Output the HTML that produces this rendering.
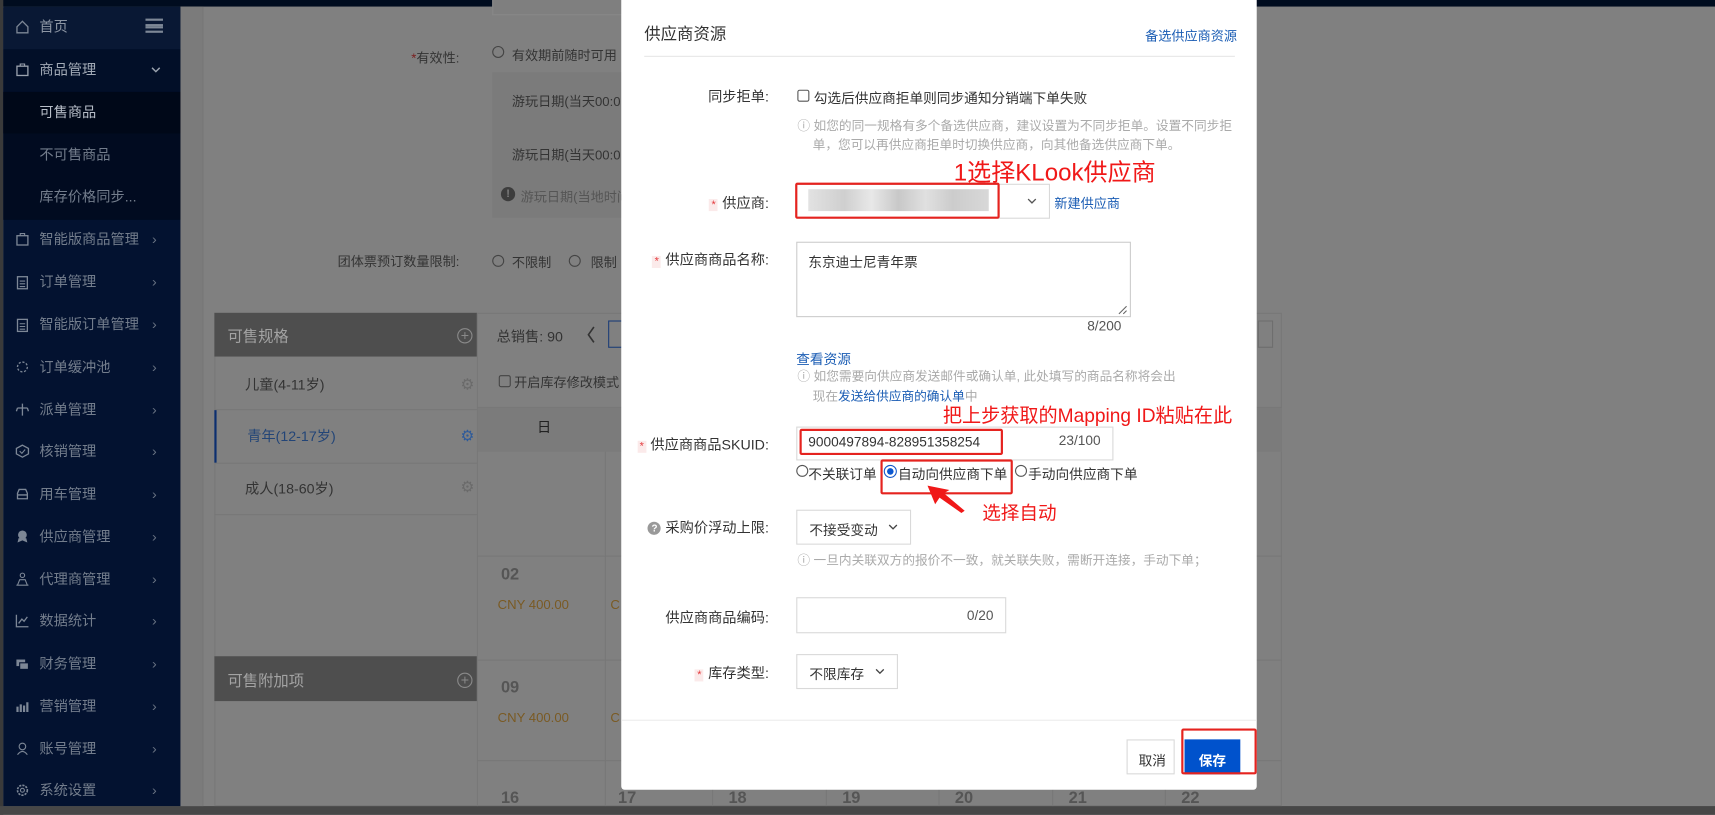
<!DOCTYPE html>
<html><head><meta charset="utf-8"><style>
*{margin:0;padding:0;box-sizing:border-box}
html,body{width:1715px;height:815px;overflow:hidden;background:#808080}
#w{position:absolute;left:0;top:0;width:1568px;height:745px;transform:scale(1.09375);transform-origin:0 0;font-family:"Liberation Sans","Noto Sans CJK SC",sans-serif;background:#808080;overflow:hidden}
.a{position:absolute;white-space:nowrap}
.sb{position:absolute;left:3px;top:7px;width:162px;height:730px;background:#031230}
.mi{position:absolute;left:3px;width:162px;height:39px;font-size:13px;color:#737d8c;line-height:39px}
.mi .t{position:absolute;left:33px}
.mi .ar{position:absolute;left:136px;font-size:13px;color:#687282}
.mi svg{position:absolute;left:11px;top:13px}
.lbl{position:absolute;font-size:13px;color:#333;text-align:right;width:180px;white-space:nowrap}
.req{color:#e4393c;font-size:10px;margin-right:4px;background:#fbeaea;padding:0 2px}
.hint{position:absolute;font-size:11.6px;color:#aaa;white-space:nowrap}
.inp{position:absolute;border:1px solid #d9d9d9;background:#fff}
.red{position:absolute;border:2px solid #e5231f;border-radius:2px}
.lk{color:#1b5db4}
.chev{position:absolute}
</style></head><body><div id="w">
<div class="a" style="left:0;top:0;width:1568px;height:6px;background:#000c1f"></div>
<div class="a" style="left:0;top:0;width:3px;height:745px;background:#3a3a3a"></div>
<div class="a" style="left:0;top:737px;width:1568px;height:8px;background:#474747"></div>
<div class="sb"></div>
<div class="a" style="left:3px;top:6px;width:162px;height:39px;background:#091834"></div>
<div class="a" style="left:3px;top:45px;width:162px;height:39px;background:#020f28"></div>
<div class="a" style="left:3px;top:84px;width:162px;height:117px;background:#010b20"></div>
<div class="a" style="left:3px;top:84px;width:162px;height:38px;background:#000818"></div>
<div class="mi" style="top:5px"><svg width="13" height="13" viewBox="0 0 13 13"><path d="M1.5 6.5L6.5 1.5L11.5 6.5V12H1.5Z" fill="none" stroke="#7d8796" stroke-width="1.2"/></svg><span class="t" style="color:#8d96a4">首页</span><span class="a" style="left:130px;top:12px;width:16px;height:13px;border-top:2px solid #7d8796;border-bottom:2px solid #7d8796"><span class="a" style="left:0;top:2.5px;width:16px;height:4px;border-top:2px solid #7d8796;border-bottom:2px solid #7d8796"></span></span></div>
<div class="mi" style="top:44px"><svg width="13" height="13"><rect x="1.5" y="3.5" width="10" height="8.5" fill="none" stroke="#9aa2ae" stroke-width="1.2"/><path d="M4.5 3.5V1.5H8.5V3.5" fill="none" stroke="#9aa2ae"/></svg><span class="t" style="color:#a2aab6">商品管理</span><svg style="left:135px;top:17px" width="9" height="6"><path d="M1 1L4.5 4.5L8 1" fill="none" stroke="#9aa2ae" stroke-width="1.3"/></svg></div>
<div class="mi" style="top:83px"><span class="t" style="color:#b7bec8">可售商品</span></div>
<div class="mi" style="top:122px"><span class="t">不可售商品</span></div>
<div class="mi" style="top:160px"><span class="t">库存价格同步...</span></div>
<div class="mi" style="top:199px"><svg width="13" height="13"><rect x="1.5" y="3.5" width="10" height="8.5" fill="none" stroke="#7d8796" stroke-width="1.2"/><path d="M4.5 3.5V1.5H8.5V3.5" fill="none" stroke="#7d8796"/></svg><span class="t">智能版商品管理</span><span class="ar">›</span></div>
<div class="mi" style="top:238px"><svg width="13" height="14"><rect x="2" y="2" width="9" height="11" fill="none" stroke="#7d8796" stroke-width="1.2"/><path d="M4 6H9M4 8.5H9M4 11H9" stroke="#7d8796"/></svg><span class="t">订单管理</span><span class="ar">›</span></div>
<div class="mi" style="top:277px"><svg width="13" height="14"><rect x="2" y="2" width="9" height="11" fill="none" stroke="#7d8796" stroke-width="1.2"/><path d="M4 6H9M4 8.5H9M4 11H9" stroke="#7d8796"/></svg><span class="t">智能版订单管理</span><span class="ar">›</span></div>
<div class="mi" style="top:316px"><svg width="13" height="13"><circle cx="6.5" cy="6.5" r="4.5" fill="none" stroke="#7d8796" stroke-dasharray="2 1.5" stroke-width="1.2"/></svg><span class="t">订单缓冲池</span><span class="ar">›</span></div>
<div class="mi" style="top:355px"><svg width="13" height="13"><path d="M6.5 1V12M2 5H11M2 5L1 8M11 5L12 8" fill="none" stroke="#7d8796" stroke-width="1.2"/></svg><span class="t">派单管理</span><span class="ar">›</span></div>
<div class="mi" style="top:393px"><svg width="13" height="13"><path d="M6.5 1L12 4V9L6.5 12L1 9V4Z" fill="none" stroke="#7d8796" stroke-width="1.2"/><path d="M4 6.5L6 8.5L9 5" fill="none" stroke="#7d8796"/></svg><span class="t">核销管理</span><span class="ar">›</span></div>
<div class="mi" style="top:432px"><svg width="13" height="13"><path d="M2 11V6L3.5 2.5H9.5L11 6V11ZM2 7.5H11" fill="none" stroke="#7d8796" stroke-width="1.2"/></svg><span class="t">用车管理</span><span class="ar">›</span></div>
<div class="mi" style="top:471px"><svg width="13" height="13"><circle cx="6.5" cy="5" r="4" fill="#7d8796"/><path d="M3 8L2 12L6.5 10L11 12L10 8" fill="#7d8796"/></svg><span class="t">供应商管理</span><span class="ar">›</span></div>
<div class="mi" style="top:510px"><svg width="13" height="13"><circle cx="6.5" cy="3" r="2" fill="none" stroke="#7d8796"/><path d="M2 12L4 7H9L11 12ZM1 12H12" fill="none" stroke="#7d8796"/></svg><span class="t">代理商管理</span><span class="ar">›</span></div>
<div class="mi" style="top:548px"><svg width="13" height="13"><path d="M1 1V12H12M3 9L6 5L8 7L11 3" fill="none" stroke="#7d8796" stroke-width="1.2"/></svg><span class="t">数据统计</span><span class="ar">›</span></div>
<div class="mi" style="top:587px"><svg width="13" height="13"><rect x="1" y="3" width="8" height="6" fill="#7d8796"/><rect x="4" y="6" width="8" height="6" fill="#7d8796" stroke="#031230"/></svg><span class="t">财务管理</span><span class="ar">›</span></div>
<div class="mi" style="top:626px"><svg width="13" height="13"><path d="M2 12V7M5 12V5M8 12V6M11 12V3" stroke="#7d8796" stroke-width="2"/></svg><span class="t">营销管理</span><span class="ar">›</span></div>
<div class="mi" style="top:665px"><svg width="13" height="13"><circle cx="6.5" cy="4.5" r="3" fill="none" stroke="#7d8796"/><path d="M2 12Q6.5 6 11 12" fill="none" stroke="#7d8796"/></svg><span class="t">账号管理</span><span class="ar">›</span></div>
<div class="mi" style="top:703px"><svg width="13" height="13"><circle cx="6.5" cy="6.5" r="4.5" fill="none" stroke="#7d8796" stroke-width="1.5" stroke-dasharray="2 1"/><circle cx="6.5" cy="6.5" r="1.8" fill="none" stroke="#7d8796"/></svg><span class="t">系统设置</span><span class="ar">›</span></div>

<div class="a" style="left:165px;top:6px;width:21px;height:731px;background:#7b7b7b;border-right:1px solid #767676"></div>
<div class="a" style="left:450px;top:0;width:130px;height:14px;border:1px solid #888;border-top:none;background:#7f7f7f"></div>
<div class="a" style="left:330px;top:44px;width:90px;text-align:right;font-size:12px;color:#333"><span style="color:#7a1c1c">*</span>有效性:</div>
<div class="a" style="left:450px;top:42px;width:11px;height:11px;border:1px solid #444;border-radius:50%"></div>
<div class="a" style="left:468px;top:42px;font-size:12px;color:#333">有效期前随时可用</div>
<div class="a" style="left:450px;top:66px;width:130px;height:133px;background:#7b7b7b"></div>
<div class="a" style="left:468px;top:84px;font-size:12px;color:#333">游玩日期(当天00:0</div>
<div class="a" style="left:468px;top:133px;font-size:12px;color:#333">游玩日期(当天00:0</div>
<div class="a" style="left:458px;top:171px;width:13px;height:13px;border-radius:50%;background:#3d3d3d;color:#7f7f7f;font-size:10px;text-align:center;line-height:13px;font-weight:bold">!</div>
<div class="a" style="left:476px;top:171px;font-size:12px;color:#555">游玩日期(当地时间</div>
<div class="a" style="left:250px;top:230px;width:170px;text-align:right;font-size:12px;color:#333">团体票预订数量限制:</div>
<div class="a" style="left:450px;top:233px;width:11px;height:11px;border:1px solid #444;border-radius:50%"></div>
<div class="a" style="left:468px;top:231px;font-size:12px;color:#333">不限制</div>
<div class="a" style="left:520px;top:233px;width:11px;height:11px;border:1px solid #444;border-radius:50%"></div>
<div class="a" style="left:540px;top:231px;font-size:12px;color:#333">限制</div>
<div class="a" style="left:196px;top:286px;width:976px;height:451px;border:1px solid #777"></div>
<div class="a" style="left:196px;top:286px;width:240px;height:40px;background:#4e4e4e"></div>
<div class="a" style="left:208px;top:297px;font-size:14px;color:#a3a3a3">可售规格</div>
<div class="a" style="left:418px;top:300px;width:14px;height:14px;border:1px solid #8a8a8a;border-radius:50%;color:#8a8a8a;font-size:13px;line-height:11px;text-align:center">+</div>
<div class="a" style="left:196px;top:374px;width:240px;height:1px;background:#777"></div>
<div class="a" style="left:196px;top:423px;width:240px;height:1px;background:#777"></div>
<div class="a" style="left:196px;top:470px;width:240px;height:1px;background:#777"></div>
<div class="a" style="left:196px;top:375px;width:2px;height:48px;background:#0c2f70"></div>
<div class="a" style="left:224px;top:341px;font-size:13px;color:#333">儿童(4-11岁)</div>
<div class="a" style="left:226px;top:388px;font-size:13px;color:#234577">青年(12-17岁)</div>
<div class="a" style="left:224px;top:436px;font-size:13px;color:#333">成人(18-60岁)</div>
<div class="a" style="left:421px;top:343px;font-size:14px;color:#6a6a6a">⚙</div>
<div class="a" style="left:421px;top:390px;font-size:14px;color:#2d5a9a">⚙</div>
<div class="a" style="left:421px;top:437px;font-size:14px;color:#6a6a6a">⚙</div>
<div class="a" style="left:196px;top:600px;width:240px;height:41px;background:#4e4e4e"></div>
<div class="a" style="left:208px;top:612px;font-size:14px;color:#a3a3a3">可售附加项</div>
<div class="a" style="left:418px;top:615px;width:14px;height:14px;border:1px solid #8a8a8a;border-radius:50%;color:#8a8a8a;font-size:13px;line-height:11px;text-align:center">+</div>
<div class="a" style="left:436px;top:286px;width:1px;height:451px;background:#777"></div>
<div class="a" style="left:454px;top:297px;font-size:13px;color:#333">总销售: 90</div>
<svg class="a" style="left:536px;top:298px" width="9" height="16"><path d="M7 1L2 8L7 15" fill="none" stroke="#333" stroke-width="1.5"/></svg>
<div class="a" style="left:556px;top:293px;width:14px;height:25px;border:1px solid #1c3d77"></div>
<div class="a" style="left:1150px;top:293px;width:14px;height:25px;border:1px solid #6d6d6d"></div>
<div class="a" style="left:456px;top:343px;width:11px;height:11px;border:1px solid #444;border-radius:2px"></div>
<div class="a" style="left:470px;top:341px;font-size:12px;color:#333">开启库存修改模式</div>
<div class="a" style="left:437px;top:372px;width:735px;height:1px;background:#777"></div>
<div class="a" style="left:437px;top:373px;width:735px;height:40px;background:#7b7b7b"></div>
<div class="a" style="left:491px;top:380px;font-size:13px;color:#222">日</div>
<div class="a" style="left:437px;top:508px;width:735px;height:1px;background:#777"></div>
<div class="a" style="left:437px;top:603px;width:735px;height:1px;background:#777"></div>
<div class="a" style="left:437px;top:695px;width:735px;height:1px;background:#777"></div>
<div class="a" style="left:553px;top:413px;width:1px;height:324px;background:#777"></div>
<div class="a" style="left:458px;top:517px;font-size:15px;font-weight:bold;color:#555">02</div>
<div class="a" style="left:455px;top:546px;font-size:12px;color:#7a5a23">CNY 400.00</div>
<div class="a" style="left:458px;top:620px;font-size:15px;font-weight:bold;color:#555">09</div>
<div class="a" style="left:455px;top:649px;font-size:12px;color:#7a5a23">CNY 400.00</div>
<div class="a" style="left:558px;top:546px;font-size:12px;color:#7a5a23">C</div>
<div class="a" style="left:558px;top:649px;font-size:12px;color:#7a5a23">C</div>
<div class="a" style="left:458px;top:721px;font-size:15px;font-weight:bold;color:#555">16</div>
<div class="a" style="left:565px;top:721px;font-size:15px;font-weight:bold;color:#555">17</div>
<div class="a" style="left:666px;top:721px;font-size:15px;font-weight:bold;color:#555">18</div>
<div class="a" style="left:770px;top:721px;font-size:15px;font-weight:bold;color:#555">19</div>
<div class="a" style="left:873px;top:721px;font-size:15px;font-weight:bold;color:#555">20</div>
<div class="a" style="left:977px;top:721px;font-size:15px;font-weight:bold;color:#555">21</div>
<div class="a" style="left:1080px;top:721px;font-size:15px;font-weight:bold;color:#555">22</div>
<div class="a" style="left:651px;top:696px;width:1px;height:41px;background:#777"></div>
<div class="a" style="left:755px;top:696px;width:1px;height:41px;background:#777"></div>
<div class="a" style="left:858px;top:696px;width:1px;height:41px;background:#777"></div>
<div class="a" style="left:962px;top:696px;width:1px;height:41px;background:#777"></div>
<div class="a" style="left:1065px;top:696px;width:1px;height:41px;background:#777"></div>

<div class="a" style="left:568px;top:0;width:581px;height:722px;background:#fff;border-radius:0 0 3px 3px"></div>
<div class="a" style="left:589px;top:20px;font-size:15px;color:#333">供应商资源</div>
<div class="a lk" style="left:1047px;top:24px;font-size:12px">备选供应商资源</div>
<div class="a" style="left:589px;top:51px;width:540px;height:1px;background:#e6e6e6"></div>

<div class="lbl" style="left:523px;top:78px">同步拒单:</div>
<div class="a" style="left:729px;top:82px;width:11px;height:11px;border:1px solid #555;border-radius:2px"></div>
<div class="a" style="left:744px;top:79px;font-size:12.5px;color:#333">勾选后供应商拒单则同步通知分销端下单失败</div>
<div class="hint" style="left:729px;top:107px">ⓘ 如您的同一规格有多个备选供应商，建议设置为不同步拒单。设置不同步拒</div>
<div class="hint" style="left:743px;top:124px">单，您可以再供应商拒单时切换供应商，向其他备选供应商下单。</div>
<div class="a" style="left:872px;top:140px;font-size:22px;color:#f01818">1选择KLook供应商</div>

<div class="lbl" style="left:523px;top:175px"><span class="req">*</span>供应商:</div>
<div class="inp" style="left:728px;top:168px;width:232px;height:32px"></div>
<div class="a" style="left:739px;top:173px;width:165px;height:20px;background:linear-gradient(90deg,#e2e2e2,#cfcfcf 20%,#e8e8e8 35%,#c8c8c8 50%,#e0e0e0 65%,#cccccc 80%,#d8d8d8)"></div>
<div class="red" style="left:727px;top:167px;width:187px;height:33px"></div>
<svg class="chev" style="left:939px;top:181px" width="9" height="6"><path d="M1 1L4.5 4.5L8 1" fill="none" stroke="#555" stroke-width="1.2"/></svg>
<div class="a lk" style="left:964px;top:177px;font-size:12px">新建供应商</div>

<div class="lbl" style="left:523px;top:227px"><span class="req">*</span>供应商商品名称:</div>
<div class="inp" style="left:728px;top:221px;width:306px;height:69px;border-color:#ccc"></div>
<div class="a" style="left:739px;top:229px;font-size:12.5px;color:#333">东京迪士尼青年票</div>
<svg class="a" style="left:1022px;top:279px" width="9" height="9"><path d="M1 8L8 1M5 8L8 5" stroke="#666"/></svg>
<div class="a" style="left:994px;top:291px;font-size:12.5px;color:#555">8/200</div>

<div class="a lk" style="left:728px;top:318px;font-size:12.5px">查看资源</div>
<div class="hint" style="left:729px;top:336px">ⓘ 如您需要向供应商发送邮件或确认单, 此处填写的商品名称将会出</div>
<div class="hint" style="left:743px;top:354px">现在<span class="lk">发送给供应商的确认单</span>中</div>
<div class="a" style="left:862px;top:367px;font-size:17.5px;color:#f01818">把上步获取的Mapping ID粘贴在此</div>

<div class="lbl" style="left:523px;top:396px"><span class="req">*</span>供应商商品SKUID:</div>
<div class="inp" style="left:728px;top:390px;width:290px;height:31px"></div>
<div class="red" style="left:731px;top:392px;width:186px;height:24px"></div>
<div class="a" style="left:739px;top:397px;font-size:12.5px;color:#333">9000497894-828951358254</div>
<div class="a" style="left:968px;top:396px;font-size:12.5px;color:#555">23/100</div>
<div class="a" style="left:728px;top:425px;width:11px;height:11px;border:1px solid #555;border-radius:50%"></div>
<div class="a" style="left:739px;top:423px;font-size:12.5px;color:#333">不关联订单</div>
<div class="a" style="left:808px;top:425px;width:12px;height:12px;border:1px solid #1458c8;border-radius:50%"><div class="a" style="left:2px;top:2px;width:6px;height:6px;border-radius:50%;background:#0b57d0"></div></div>
<div class="a" style="left:821px;top:423px;font-size:12.5px;color:#333;background:#fff">自动向供应商下单</div>
<div class="a" style="left:928px;top:425px;width:11px;height:11px;border:1px solid #555;border-radius:50%"></div>
<div class="a" style="left:940px;top:423px;font-size:12.5px;color:#333">手动向供应商下单</div>
<div class="red" style="left:805px;top:420px;width:121px;height:32px"></div>
<svg class="a" style="left:840px;top:440px" width="50" height="32" viewBox="840 440 50 32"><polygon points="848,444 868,448 863,451 882,467 879,469 859,455 855,461" fill="#f01818"/></svg>
<div class="a" style="left:898px;top:455px;font-size:17px;color:#f01818">选择自动</div>

<div class="lbl" style="left:523px;top:472px"><span style="display:inline-block;width:12px;height:12px;border-radius:50%;background:#999;color:#fff;font-size:9px;line-height:12px;text-align:center;font-weight:bold;margin-right:4px;vertical-align:1px">?</span>采购价浮动上限:</div>
<div class="inp" style="left:728px;top:466px;width:105px;height:32px"></div>
<div class="a" style="left:740px;top:474px;font-size:12.5px;color:#333">不接受变动</div>
<svg class="chev" style="left:812px;top:479px" width="9" height="6"><path d="M1 1L4.5 4.5L8 1" fill="none" stroke="#444" stroke-width="1.2"/></svg>
<div class="hint" style="left:729px;top:504px">ⓘ 一旦内关联双方的报价不一致，就关联失败，需断开连接，手动下单；</div>

<div class="lbl" style="left:523px;top:554px">供应商商品编码:</div>
<div class="inp" style="left:728px;top:546px;width:192px;height:33px"></div>
<div class="a" style="left:884px;top:556px;font-size:12.5px;color:#555">0/20</div>

<div class="lbl" style="left:523px;top:605px"><span class="req">*</span>库存类型:</div>
<div class="inp" style="left:728px;top:598px;width:93px;height:32px"></div>
<div class="a" style="left:740px;top:606px;font-size:12.5px;color:#333">不限库存</div>
<svg class="chev" style="left:800px;top:611px" width="9" height="6"><path d="M1 1L4.5 4.5L8 1" fill="none" stroke="#444" stroke-width="1.2"/></svg>

<div class="a" style="left:568px;top:658px;width:581px;height:1px;background:#ececec"></div>
<div class="inp" style="left:1030px;top:676px;width:44px;height:32px"></div>
<div class="a" style="left:1041px;top:685px;font-size:12.5px;color:#333">取消</div>
<div class="a" style="left:1083px;top:676px;width:51px;height:32px;background:#0052cc"></div>
<div class="a" style="left:1096px;top:685px;font-size:12.5px;color:#fff;font-weight:bold">保存</div>
<div class="red" style="left:1080px;top:666px;width:69px;height:42px"></div>
</div></body></html>
